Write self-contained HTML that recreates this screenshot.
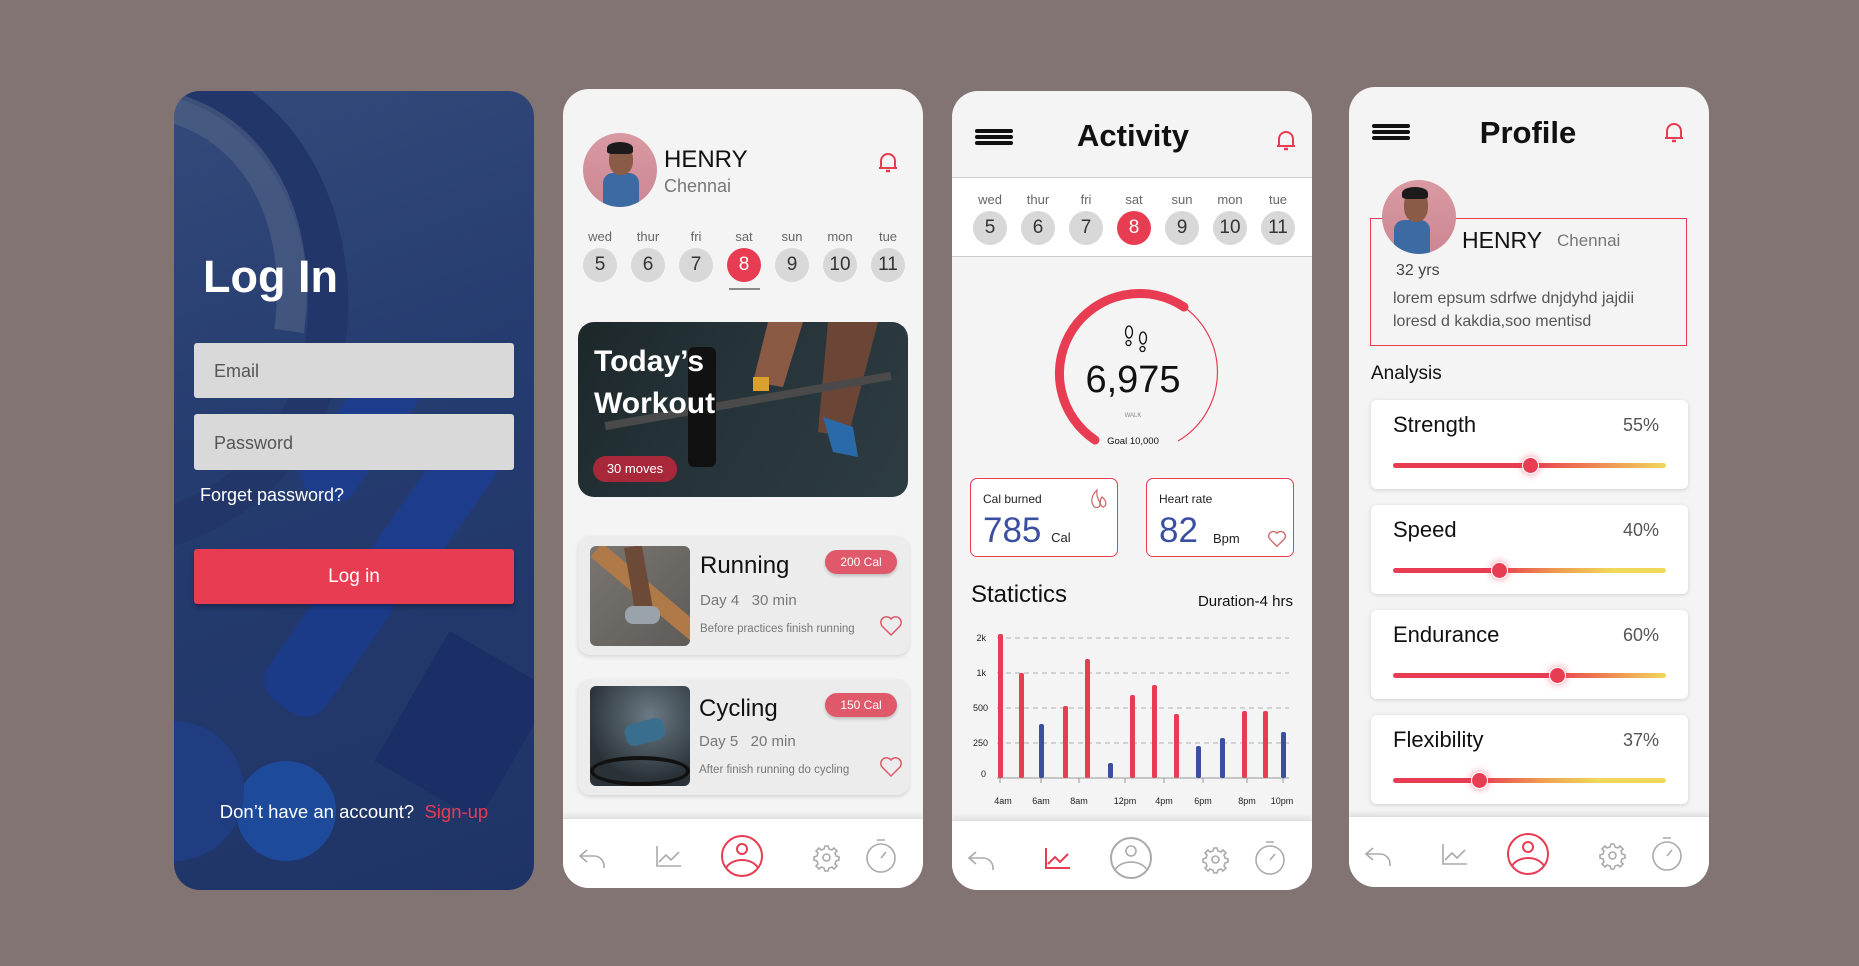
<!DOCTYPE html>
<html><head><meta charset="utf-8">
<style>
*{margin:0;padding:0;box-sizing:border-box}
body{width:1859px;height:966px;background:#837474;position:relative;overflow:hidden;font-family:"Liberation Sans",sans-serif}
.p{position:absolute;width:360px;height:799px;border-radius:26px;overflow:hidden;background:#f4f4f4}
.a{position:absolute}
.t{position:absolute;white-space:nowrap;line-height:1}
.lbl{position:absolute;font-size:13px;color:#666;transform:translateX(-50%)}
.dc{position:absolute;width:34px;height:34px;border-radius:50%;background:#d8d8d8;color:#333;font-size:19px;text-align:center;line-height:34px;transform:translate(-50%,-50%)}
.dc.on{background:#e83c52;color:#fff}
.nav{position:absolute;left:0;top:729px;width:360px;height:71px;background:#fff;box-shadow:0 -3px 5px rgba(0,0,0,.08);border-top:1px solid #e0e0e0}
.card{position:absolute;background:#ececec;border-radius:12px;box-shadow:0 2px 4px rgba(0,0,0,.12)}
.pill{position:absolute;background:#e0596b;color:#fff;font-size:12px;text-align:center;border-radius:14px;box-shadow:0 2px 3px rgba(0,0,0,.2)}
.an{position:absolute;left:22px;width:317px;height:89px;background:#fff;border-radius:6px;box-shadow:0 1px 4px rgba(0,0,0,.15)}
.an .ti{position:absolute;left:22px;top:12px;font-size:22px;color:#111}
.an .pc{position:absolute;right:29px;top:15px;font-size:18px;color:#555}
.an .tr{position:absolute;left:22px;top:63px;width:273px;height:5px;border-radius:3px}
.an .kn{position:absolute;top:57px;width:17px;height:17px;border-radius:50%;background:#e83c52;border:1.5px solid #fff;box-shadow:0 0 8px rgba(232,60,82,.6)}
</style></head><body>

<!-- Panel 1 -->
<div class="p" style="left:174px;top:91px;background:linear-gradient(160deg,#344a7a 0%,#253c70 40%,#1f3466 100%)">
  <svg class="a" style="left:0;top:0" width="360" height="799">
    <path d="M-40 -20 C 120 -10 170 150 150 260 C 130 360 60 420 -20 440" fill="none" stroke="#22366a" stroke-width="40"/>
    <path d="M-40 10 C 90 20 130 140 115 240" fill="none" stroke="#5a6a8a" stroke-width="30" opacity=".5"/>
    <rect x="160" y="250" width="60" height="170" rx="25" fill="#1d3c8c" transform="rotate(35 190 335)"/>
    <rect x="230" y="330" width="60" height="180" rx="25" fill="#1d3c8c" transform="rotate(35 260 420)"/>
    <rect x="120" y="470" width="70" height="160" rx="25" fill="#1b3a88" transform="rotate(35 155 550)"/>
    <rect x="230" y="560" width="120" height="150" fill="#1b2e66" transform="rotate(30 290 635)"/>
    <circle cx="112" cy="720" r="50" fill="#1d4a9a"/>
    <circle cx="0" cy="700" r="70" fill="#1f3d80"/>
  </svg>
  <div class="t" style="left:29px;top:163px;font-size:45px;font-weight:bold;color:#fff">Log In</div>
  <div class="a" style="left:20px;top:252px;width:320px;height:55px;background:#d9d9d9;border-radius:3px"></div>
  <div class="t" style="left:40px;top:271px;font-size:18px;color:#555">Email</div>
  <div class="a" style="left:20px;top:323px;width:320px;height:56px;background:#d9d9d9;border-radius:3px"></div>
  <div class="t" style="left:40px;top:343px;font-size:18px;color:#555">Password</div>
  <div class="t" style="left:26px;top:395px;font-size:18px;color:#fff">Forget password?</div>
  <div class="a" style="left:20px;top:458px;width:320px;height:55px;background:#e83c52;border-radius:3px;box-shadow:0 3px 5px rgba(0,0,0,.3);color:#fff;font-size:19px;text-align:center;line-height:55px">Log in</div>
  <div class="t" style="left:0;width:360px;text-align:center;top:712px;font-size:18.5px;color:#fff">Don’t have an account?&nbsp; <span style="color:#e83c52">Sign-up</span></div>
</div>

<!-- Panel 2 -->
<div class="p" style="left:563px;top:89px">
  <div class="a" style="left:20px;top:44px;width:74px;height:74px;border-radius:50%;background:linear-gradient(#d99aa3,#cc8793);overflow:hidden">
    <div class="a" style="left:20px;top:40px;width:36px;height:40px;border-radius:10px 10px 0 0;background:#3c6aa3"></div>
    <div class="a" style="left:26px;top:12px;width:24px;height:30px;border-radius:45%;background:#8a5c48"></div>
    <div class="a" style="left:24px;top:9px;width:26px;height:12px;border-radius:50% 50% 20% 20%;background:#1c1a1a"></div>
  </div>
  <div class="t" style="left:101px;top:59px;font-size:24px;color:#111">HENRY</div>
  <div class="t" style="left:101px;top:88px;font-size:18px;color:#777">Chennai</div>
  <svg class="a" style="left:313px;top:62px" width="24" height="24" viewBox="0 0 24 24"><path d="M5 17 V10 a7 7 0 0 1 14 0 V17 H3 H21" fill="none" stroke="#e83c52" stroke-width="2"/><path d="M10 20 h4" stroke="#e83c52" stroke-width="2.5"/></svg>
  <div class="lbl" style="left:37px;top:140px">wed</div><div class="lbl" style="left:85px;top:140px">thur</div><div class="lbl" style="left:133px;top:140px">fri</div><div class="lbl" style="left:181px;top:140px">sat</div><div class="lbl" style="left:229px;top:140px">sun</div><div class="lbl" style="left:277px;top:140px">mon</div><div class="lbl" style="left:325px;top:140px">tue</div>
  <div class="dc" style="left:37px;top:176px">5</div><div class="dc" style="left:85px;top:176px">6</div><div class="dc" style="left:133px;top:176px">7</div><div class="dc on" style="left:181px;top:176px">8</div><div class="dc" style="left:229px;top:176px">9</div><div class="dc" style="left:277px;top:176px">10</div><div class="dc" style="left:325px;top:176px">11</div>
  <div class="a" style="left:166px;top:199px;width:31px;height:2px;background:#888"></div>

  <div class="a" style="left:15px;top:233px;width:330px;height:175px;border-radius:16px;overflow:hidden;background:linear-gradient(120deg,#1c2729 0%,#26343a 45%,#2d3c42 100%)">
    <svg class="a" style="left:0;top:0" width="330" height="175">
      <path d="M190 0 L175 60 L205 65 L225 0Z" fill="#8a5a44"/>
      <path d="M250 0 L240 110 L270 115 L300 0Z" fill="#6b4536"/>
      <rect x="25" y="75" width="290" height="8" fill="#4a4a4a" transform="rotate(-10 170 79)"/>
      <rect x="110" y="25" width="28" height="120" rx="6" fill="#111"/>
      <path d="M245 95 l30 10 l5 30 l-25 -5z" fill="#2a6aa8"/>
      <rect x="175" y="55" width="16" height="14" fill="#d9a030"/>
    </svg>
  </div>
  <div class="t" style="left:31px;top:258px;font-size:30px;font-weight:bold;color:#fff">Today’s</div>
  <div class="t" style="left:31px;top:300px;font-size:30px;font-weight:bold;color:#fff">Workout</div>
  <div class="a" style="left:30px;top:367px;width:84px;height:26px;border-radius:13px;background:#a8283a;color:#fff;font-size:13px;text-align:center;line-height:26px">30 moves</div>

  <div class="card" style="left:15px;top:447px;width:331px;height:119px">
    <div class="a" style="left:12px;top:10px;width:100px;height:100px;border-radius:6px;background:linear-gradient(135deg,#7a7570,#5e5b58);overflow:hidden">
      <div class="a" style="left:-10px;top:40px;width:140px;height:18px;background:#b07a48;transform:rotate(40deg)"></div>
      <div class="a" style="left:40px;top:0;width:18px;height:70px;background:#6d4a38;transform:rotate(-10deg)"></div>
      <div class="a" style="left:35px;top:60px;width:35px;height:18px;border-radius:8px;background:#9aa3aa"></div>
    </div>
    <div class="t" style="left:122px;top:18px;font-size:24px;color:#111">Running</div>
    <div class="t" style="left:122px;top:57px;font-size:15px;color:#777">Day 4 &nbsp;&nbsp;30 min</div>
    <div class="t" style="left:122px;top:88px;font-size:11.5px;color:#777">Before practices finish running</div>
    <div class="pill" style="left:247px;top:14px;width:72px;height:24px;line-height:24px">200 Cal</div>
    <svg class="a" style="left:301px;top:79px" width="24" height="22" viewBox="0 0 24 22"><path d="M12 20 L3 11 A5 5 0 0 1 12 4 A5 5 0 0 1 21 11Z" fill="none" stroke="#e0596b" stroke-width="1.5"/></svg>
  </div>
  <div class="card" style="left:15px;top:590px;width:331px;height:116px">
    <div class="a" style="left:12px;top:7px;width:100px;height:100px;border-radius:6px;background:radial-gradient(circle at 60% 30%,#6b7a84,#2a3238 70%);overflow:hidden">
      <div class="a" style="left:35px;top:35px;width:40px;height:22px;border-radius:8px;background:#3a6e8e;transform:rotate(-15deg)"></div>
      <div class="a" style="left:0;top:70px;width:100px;height:30px;border-radius:50%;border:4px solid #111"></div>
    </div>
    <div class="t" style="left:121px;top:18px;font-size:24px;color:#111">Cycling</div>
    <div class="t" style="left:121px;top:55px;font-size:15px;color:#777">Day 5 &nbsp;&nbsp;20 min</div>
    <div class="t" style="left:121px;top:86px;font-size:11.5px;color:#777">After finish running do cycling</div>
    <div class="pill" style="left:247px;top:14px;width:72px;height:24px;line-height:24px">150 Cal</div>
    <svg class="a" style="left:301px;top:77px" width="24" height="22" viewBox="0 0 24 22"><path d="M12 20 L3 11 A5 5 0 0 1 12 4 A5 5 0 0 1 21 11Z" fill="none" stroke="#e0596b" stroke-width="1.5"/></svg>
  </div>
  <div class="nav">
    <svg class="a" style="left:0;top:0" width="360" height="71">
      <g fill="none" stroke="#aaa" stroke-width="1.6">
        <path d="M24 31 l-7 6 l7 6 M17 37 h14 a10 10 0 0 1 10 10 v2"/>
        <path d="M94 27 v20 h24 M96 43 l7 -7 l5 5 l8 -8"/>
        <path d="M262 27 l3 0 l1 3 l3 1 l2-2 l3 3 l-2 2 l1 3 l3 1 v3 l-3 1 l-1 3 l2 2 l-3 3 l-2-2 l-3 1 l-1 3 h-3 l-1-3 l-3-1 l-2 2 l-3-3 l2-2 l-1-3 l-3-1 v-3 l3-1 l1-3 l-2-2 l3-3 l2 2 l3-1z"/>
        <circle cx="263.5" cy="38.5" r="3.5"/>
        <circle cx="318" cy="39" r="14"/><path d="M314 21 h8 M318 39 l5 -6"/>
      </g>
      <g fill="none" stroke="#e83c52" stroke-width="2">
        <circle cx="179" cy="37" r="20"/><circle cx="179" cy="30" r="5"/><path d="M163 49 a17 12 0 0 1 32 0"/>
      </g>
    </svg>
  </div>
</div>

<!-- Panel 3 -->
<div class="p" style="left:952px;top:91px">
  <div class="a" style="left:23px;top:38px;width:38px;height:3.5px;background:#111;border-radius:2px"></div>
  <div class="a" style="left:23px;top:44px;width:38px;height:3.5px;background:#111;border-radius:2px"></div>
  <div class="a" style="left:23px;top:50px;width:38px;height:3.5px;background:#111;border-radius:2px"></div>
  <div class="t" style="left:0;width:362px;text-align:center;top:29px;font-size:31px;font-weight:bold;color:#111">Activity</div>
  <svg class="a" style="left:322px;top:38px" width="24" height="24" viewBox="0 0 24 24"><path d="M5 17 V10 a7 7 0 0 1 14 0 V17 H3 H21" fill="none" stroke="#e83c52" stroke-width="2"/><path d="M10 20 h4" stroke="#e83c52" stroke-width="2.5"/></svg>
  <div class="a" style="left:0;top:86px;width:360px;height:80px;background:#fff;border-top:1px solid #ccc;border-bottom:1px solid #ccc"></div>
  <div class="lbl" style="left:38px;top:101px">wed</div><div class="lbl" style="left:86px;top:101px">thur</div><div class="lbl" style="left:134px;top:101px">fri</div><div class="lbl" style="left:182px;top:101px">sat</div><div class="lbl" style="left:230px;top:101px">sun</div><div class="lbl" style="left:278px;top:101px">mon</div><div class="lbl" style="left:326px;top:101px">tue</div>
  <div class="dc" style="left:38px;top:137px">5</div><div class="dc" style="left:86px;top:137px">6</div><div class="dc" style="left:134px;top:137px">7</div><div class="dc on" style="left:182px;top:137px">8</div><div class="dc" style="left:230px;top:137px">9</div><div class="dc" style="left:278px;top:137px">10</div><div class="dc" style="left:326px;top:137px">11</div>

  <svg class="a" style="left:0;top:0" width="360" height="420">
    <path d="M143 349 A80 80 0 1 1 232 216" fill="none" stroke="#e83c52" stroke-width="9" stroke-linecap="round"/>
    <path d="M232 216 A80 80 0 0 1 226 350" fill="none" stroke="#e83c52" stroke-width="1.2"/>
    <g fill="none" stroke="#111" stroke-width="1.3">
      <ellipse cx="177" cy="241" rx="3.5" ry="6"/><ellipse cx="176.5" cy="252" rx="2.5" ry="2.5"/>
      <ellipse cx="191" cy="247" rx="3.5" ry="6"/><ellipse cx="190.5" cy="258" rx="2.5" ry="2.5"/>
    </g>
  </svg>
  <div class="t" style="left:0;width:362px;text-align:center;top:270px;font-size:38px;color:#111">6,975</div>
  <div class="t" style="left:0;width:362px;text-align:center;top:322px;font-size:6px;color:#888">WALK</div>
  <div class="t" style="left:0;width:362px;text-align:center;top:346px;font-size:9.5px;color:#111">Goal 10,000</div>

  <div class="a" style="left:18px;top:387px;width:148px;height:79px;background:#fff;border:1.2px solid #e83c52;border-radius:7px">
    <div class="t" style="left:12px;top:14px;font-size:12px;color:#222">Cal burned</div>
    <div class="t" style="left:12px;top:34px;font-size:35px;color:#3b4fa0">785 <span style="font-size:13px;color:#222">Cal</span></div>
    <svg class="a" style="left:118px;top:8px" width="20" height="24" viewBox="0 0 20 24"><path d="M8 3 C2 9 2 14 4 18 C6 22 11 21 11 17 C11 13 7 12 8 3Z M13 10 C10 14 11 19 14 20 C18 19 18 14 13 10Z" fill="none" stroke="#c66" stroke-width="1.2"/></svg>
  </div>
  <div class="a" style="left:194px;top:387px;width:148px;height:79px;background:#fff;border:1.2px solid #e83c52;border-radius:7px">
    <div class="t" style="left:12px;top:14px;font-size:12px;color:#222">Heart rate</div>
    <div class="t" style="left:12px;top:34px;font-size:35px;color:#3b4fa0">82</div>
    <div class="t" style="left:66px;top:53px;font-size:13px;color:#222">Bpm</div>
    <svg class="a" style="left:120px;top:51px" width="20" height="18" viewBox="0 0 24 22"><path d="M12 20 L3 11 A5 5 0 0 1 12 4 A5 5 0 0 1 21 11Z" fill="none" stroke="#c66" stroke-width="1.6"/></svg>
  </div>
  <div class="t" style="left:19px;top:492px;font-size:24px;color:#111">Statictics</div>
  <div class="t" style="right:19px;top:503px;font-size:15px;color:#111">Duration-4 hrs</div>
  <svg class="a" style="left:0;top:530px" width="360" height="200">
    <g font-family="Liberation Sans" font-size="9" fill="#222" text-anchor="end">
      <text x="34" y="20">2k</text><text x="34" y="55">1k</text><text x="36" y="90">500</text><text x="36" y="125">250</text><text x="34" y="156">0</text>
    </g>
    <g stroke="#999" stroke-dasharray="5 4" stroke-width="0.8">
      <path d="M45 17 H337 M45 52 H337 M45 87 H337 M45 122 H337"/>
    </g>
    <path d="M45 157 H337" stroke="#999" stroke-width="1"/>
    <g stroke="#999" stroke-width="1"><path d="M48 157v5M89 157v5M127 157v5M173 157v5M212 157v5M251 157v5M295 157v5M331 157v5"/></g>
    <g fill="#e83c52">
      <rect x="46" y="13" width="5" height="144" rx="2"/>
      <rect x="67" y="52" width="5" height="105" rx="2"/>
      <rect x="111" y="85" width="5" height="72" rx="2"/>
      <rect x="133" y="38" width="5" height="119" rx="2"/>
      <rect x="178" y="74" width="5" height="83" rx="2"/>
      <rect x="200" y="64" width="5" height="93" rx="2"/>
      <rect x="222" y="93" width="5" height="64" rx="2"/>
      <rect x="290" y="90" width="5" height="67" rx="2"/>
      <rect x="311" y="90" width="5" height="67" rx="2"/>
    </g>
    <g fill="#3b4fa0">
      <rect x="87" y="103" width="5" height="54" rx="2"/>
      <rect x="156" y="142" width="5" height="15" rx="2"/>
      <rect x="244" y="125" width="5" height="32" rx="2"/>
      <rect x="268" y="117" width="5" height="40" rx="2"/>
      <rect x="329" y="111" width="5" height="46" rx="2"/>
    </g>
    <g font-family="Liberation Sans" font-size="9" fill="#222" text-anchor="middle">
      <text x="51" y="183">4am</text><text x="89" y="183">6am</text><text x="127" y="183">8am</text><text x="173" y="183">12pm</text><text x="212" y="183">4pm</text><text x="251" y="183">6pm</text><text x="295" y="183">8pm</text><text x="330" y="183">10pm</text>
    </g>
  </svg>
  <div class="nav">
    <svg class="a" style="left:0;top:0" width="360" height="71">
      <g fill="none" stroke="#aaa" stroke-width="1.6">
        <path d="M24 31 l-7 6 l7 6 M17 37 h14 a10 10 0 0 1 10 10 v2"/>
        <path d="M262 27 l3 0 l1 3 l3 1 l2-2 l3 3 l-2 2 l1 3 l3 1 v3 l-3 1 l-1 3 l2 2 l-3 3 l-2-2 l-3 1 l-1 3 h-3 l-1-3 l-3-1 l-2 2 l-3-3 l2-2 l-1-3 l-3-1 v-3 l3-1 l1-3 l-2-2 l3-3 l2 2 l3-1z"/>
        <circle cx="263.5" cy="38.5" r="3.5"/>
        <circle cx="318" cy="39" r="14"/><path d="M314 21 h8 M318 39 l5 -6"/>
        <circle cx="179" cy="37" r="20" stroke-width="2"/><circle cx="179" cy="30" r="5"/><path d="M163 49 a17 12 0 0 1 32 0"/>
      </g>
      <path d="M94 27 v20 h24 M96 43 l7 -7 l5 5 l8 -8" fill="none" stroke="#e83c52" stroke-width="2"/>
    </svg>
  </div>
</div>

<!-- Panel 4 -->
<div class="p" style="left:1349px;top:87px;height:800px">
  <div class="a" style="left:23px;top:37px;width:38px;height:3.5px;background:#111;border-radius:2px"></div>
  <div class="a" style="left:23px;top:43px;width:38px;height:3.5px;background:#111;border-radius:2px"></div>
  <div class="a" style="left:23px;top:49px;width:38px;height:3.5px;background:#111;border-radius:2px"></div>
  <div class="t" style="left:0;width:358px;text-align:center;top:30px;font-size:31px;font-weight:bold;color:#111">Profile</div>
  <svg class="a" style="left:313px;top:34px" width="24" height="24" viewBox="0 0 24 24"><path d="M5 17 V10 a7 7 0 0 1 14 0 V17 H3 H21" fill="none" stroke="#e83c52" stroke-width="2"/><path d="M10 20 h4" stroke="#e83c52" stroke-width="2.5"/></svg>
  <div class="a" style="left:21px;top:131px;width:317px;height:128px;border:1.3px solid #e83c52"></div>
  <div class="a" style="left:33px;top:93px;width:74px;height:74px;border-radius:50%;background:linear-gradient(#d99aa3,#cc8793);overflow:hidden">
    <div class="a" style="left:12px;top:40px;width:36px;height:40px;border-radius:10px 10px 0 0;background:#3c6aa3"></div>
    <div class="a" style="left:22px;top:10px;width:24px;height:32px;border-radius:45%;background:#8a5c48"></div>
    <div class="a" style="left:20px;top:7px;width:26px;height:12px;border-radius:50% 50% 20% 20%;background:#1c1a1a"></div>
  </div>
  <div class="t" style="left:113px;top:142px;font-size:23px;color:#111">HENRY</div>
  <div class="t" style="left:208px;top:145px;font-size:17px;color:#777">Chennai</div>
  <div class="t" style="left:47px;top:176px;font-size:16px;color:#444">32 yrs</div>
  <div class="t" style="left:44px;top:204px;font-size:16px;color:#555">lorem epsum sdrfwe dnjdyhd jajdii</div>
  <div class="t" style="left:44px;top:227px;font-size:16px;color:#555">loresd d kakdia,soo mentisd</div>
  <div class="t" style="left:22px;top:277px;font-size:19px;color:#111">Analysis</div>

  <div class="an" style="top:313px"><div class="ti">Strength</div><div class="pc">55%</div><div class="tr" style="background:linear-gradient(90deg,#e83c52 0%,#e83c52 50%,#ee7a52 70%,#f0d85a 100%)"></div><div class="kn" style="left:151px"></div></div>
  <div class="an" style="top:418px"><div class="ti">Speed</div><div class="pc">40%</div><div class="tr" style="background:linear-gradient(90deg,#e83c52 0%,#e83c52 38%,#ee9a52 60%,#f0d85a 80%,#f0d85a 100%)"></div><div class="kn" style="left:120px"></div></div>
  <div class="an" style="top:523px"><div class="ti">Endurance</div><div class="pc">60%</div><div class="tr" style="background:linear-gradient(90deg,#e83c52 0%,#e83c52 58%,#ee7a52 75%,#f0d85a 100%)"></div><div class="kn" style="left:178px"></div></div>
  <div class="an" style="top:628px"><div class="ti">Flexibility</div><div class="pc">37%</div><div class="tr" style="background:linear-gradient(90deg,#e83c52 0%,#e83c52 32%,#eea052 55%,#f0d85a 75%,#f0d85a 100%)"></div><div class="kn" style="left:100px"></div></div>

  <div class="nav">
    <svg class="a" style="left:0;top:0" width="360" height="71">
      <g fill="none" stroke="#aaa" stroke-width="1.6">
        <path d="M24 31 l-7 6 l7 6 M17 37 h14 a10 10 0 0 1 10 10 v2"/>
        <path d="M94 27 v20 h24 M96 43 l7 -7 l5 5 l8 -8"/>
        <path d="M262 27 l3 0 l1 3 l3 1 l2-2 l3 3 l-2 2 l1 3 l3 1 v3 l-3 1 l-1 3 l2 2 l-3 3 l-2-2 l-3 1 l-1 3 h-3 l-1-3 l-3-1 l-2 2 l-3-3 l2-2 l-1-3 l-3-1 v-3 l3-1 l1-3 l-2-2 l3-3 l2 2 l3-1z"/>
        <circle cx="263.5" cy="38.5" r="3.5"/>
        <circle cx="318" cy="39" r="14"/><path d="M314 21 h8 M318 39 l5 -6"/>
      </g>
      <g fill="none" stroke="#e83c52" stroke-width="2">
        <circle cx="179" cy="37" r="20"/><circle cx="179" cy="30" r="5"/><path d="M163 49 a17 12 0 0 1 32 0"/>
      </g>
    </svg>
  </div>
</div>
</body></html>
